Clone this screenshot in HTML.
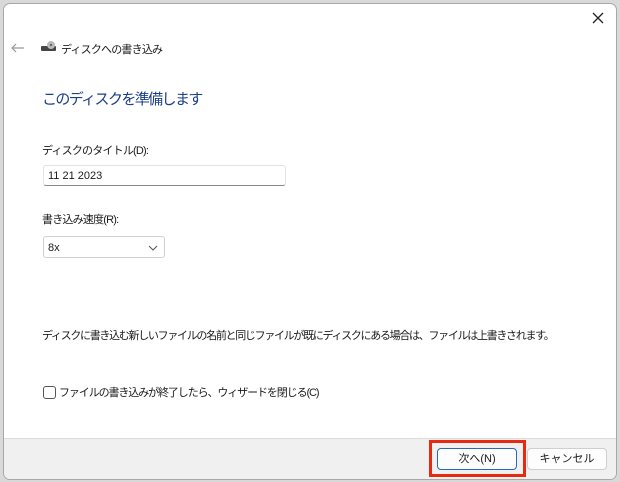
<!DOCTYPE html><html><head><meta charset="utf-8"><style>
body{margin:0;width:620px;height:482px;background:#d9d9d9;position:relative;overflow:hidden;font-family:"Liberation Sans","Noto Sans CJK JP",sans-serif;font-size:11px;color:#1a1a1a}
.win{position:absolute;left:3px;top:3px;width:612px;height:475px;background:#fff;border:1px solid #a8a8a8;border-radius:7px;overflow:hidden}
.abs{position:absolute;white-space:nowrap}
.foot{position:absolute;left:0;right:0;top:434px;bottom:0;background:#f0f0f0;border-top:1px solid #dcdcdc}
.btn{position:absolute;height:20px;border:1px solid #cfcfcf;border-radius:4px;background:#fdfdfd;text-align:center;line-height:20px;font-size:11px}
</style></head><body><div class="win">
<svg class="abs" style="left:587px;top:7px" width="14" height="14"><path d="M2 2L12 12M12 2L2 12" stroke="#222" stroke-width="1.3"/></svg>
<svg class="abs" style="left:7px;top:39px" width="14" height="10"><path d="M13 5H1M5 1L1 5L5 9" stroke="#999" stroke-width="1.2" fill="none"/></svg>
<svg class="abs" style="left:37px;top:36px" width="16" height="12"><rect x="0" y="6" width="15" height="5" fill="#444" rx="1"/><circle cx="10" cy="5" r="4" fill="#bbb"/><circle cx="10" cy="5" r="1.2" fill="#666"/></svg>
<div class="abs" style="left:57px;top:37px;letter-spacing:-0.8px">ディスクへの書き込み</div>
<div class="abs" style="left:38px;top:84px;font-size:15px;letter-spacing:-1.6px;color:#1c3f8a">このディスクを準備します</div>
<div class="abs" style="left:38px;top:138px;letter-spacing:-0.8px">ディスクのタイトル(D):</div>
<div class="abs" style="left:39px;top:161px;width:243px;height:21px;border:1px solid #e3e3e3;border-bottom:1px solid #888;border-radius:3px;line-height:21px;padding-left:4px;box-sizing:border-box;font-size:11px">11 21 2023</div>
<div class="abs" style="left:38px;top:207px;letter-spacing:-0.8px">書き込み速度(R):</div>
<div class="abs" style="left:39px;top:232px;width:122px;height:22px;border:1px solid #d0d0d0;border-radius:3px;line-height:22px;padding-left:4px;box-sizing:border-box;font-size:11px">8x<svg style="position:absolute;right:6px;top:8px" width="10" height="6"><path d="M1 1L5 5L9 1" stroke="#555" fill="none"/></svg></div>
<div class="abs" style="left:38px;top:323px;letter-spacing:-1.3px">ディスクに書き込む新しいファイルの名前と同じファイルが既にディスクにある場合は、ファイルは上書きされます。</div>
<div class="abs" style="left:39px;top:382px;width:11px;height:11px;border:1px solid #555;border-radius:3px"></div>
<div class="abs" style="left:55px;top:380px;letter-spacing:-1.1px">ファイルの書き込みが終了したら、ウィザードを閉じる(C)</div>
<div class="foot"></div>
<div class="abs" style="left:425px;top:436px;width:97px;height:37px;box-sizing:border-box;border:3px solid #e8290f"></div>
<div class="btn" style="left:433px;top:444px;width:78px;border-color:#2d67b8">次へ(N)</div>
<div class="btn" style="left:523px;top:444px;width:78px">キャンセル</div>
</div></body></html>
